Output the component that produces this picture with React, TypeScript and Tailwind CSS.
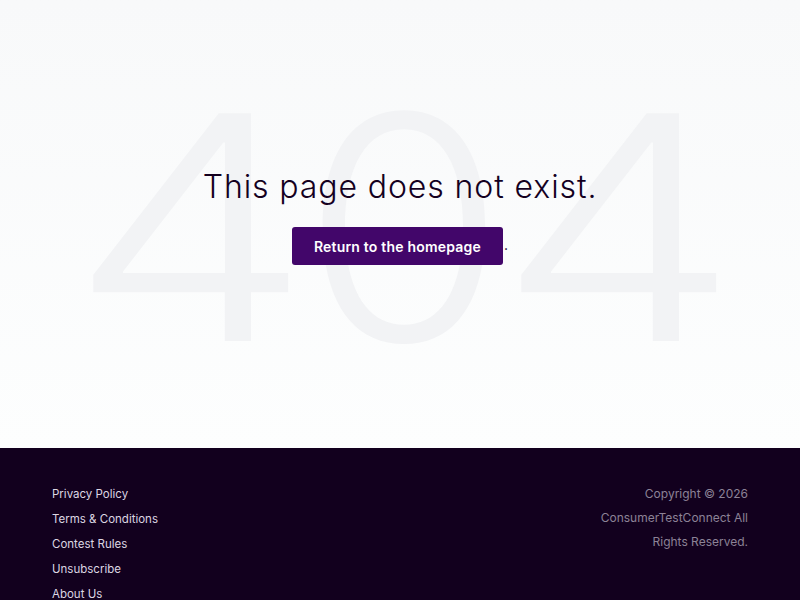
const links = ["Privacy Policy", "Terms & Conditions", "Contest Rules", "Unsubscribe", "About Us"];

export default function App() {
  return (
    <div className="min-h-screen font-['Inter',sans-serif]">
      <main className="relative h-[448px] overflow-hidden bg-gradient-to-b from-[#f8f9fa] to-[#fdfefe] flex flex-col items-center justify-center">
        {/* big faded 404 behind the message */}
        <div className="absolute inset-0 flex items-center justify-center pointer-events-none select-none text-[313px] leading-none font-light text-[#f2f3f5]">
          <div className="flex translate-x-[4px] translate-y-[3px]">
            <span className="w-[196px] text-center inline-block scale-x-[1.24]">4</span>
            <span className="w-[232px] text-center inline-block scale-x-[1.06]">0</span>
            <span className="w-[196px] text-center inline-block scale-x-[1.24]">4</span>
          </div>
        </div>
        <div className="relative flex flex-col items-center pb-[16px]">
          <h1 className="text-[32px] font-light tracking-[0.9px] text-[#14001f] leading-[40px]">
            This page does not exist.
          </h1>
          <div className="mt-[20px] flex items-start">
            <a
              href="#"
              className="h-[38px] w-[211px] flex items-center justify-center rounded-[3px] bg-[#42066a] text-white text-[14px] font-semibold tracking-[0.2px]"
            >
              Return to the homepage
            </a>
            <span className="mt-[11px] text-[#14001f] text-[14px] leading-[14px] ml-[1px]">.</span>
          </div>
        </div>
      </main>
      <footer className="bg-[#12001e] h-[152px] overflow-hidden px-[52px] pt-[34px] flex justify-between">
        <ul className="flex flex-col">
          {links.map((l) => (
            <li key={l} className="text-[11.5px] leading-[25px] text-[#dcd6e2]">
              <a href="#">{l}</a>
            </li>
          ))}
        </ul>
        <p className="w-[160px] text-right text-[12px] leading-[24px] text-[#8c8296]">
          Copyright © 2026 ConsumerTestConnect All Rights Reserved.
        </p>
      </footer>
    </div>
  );
}
